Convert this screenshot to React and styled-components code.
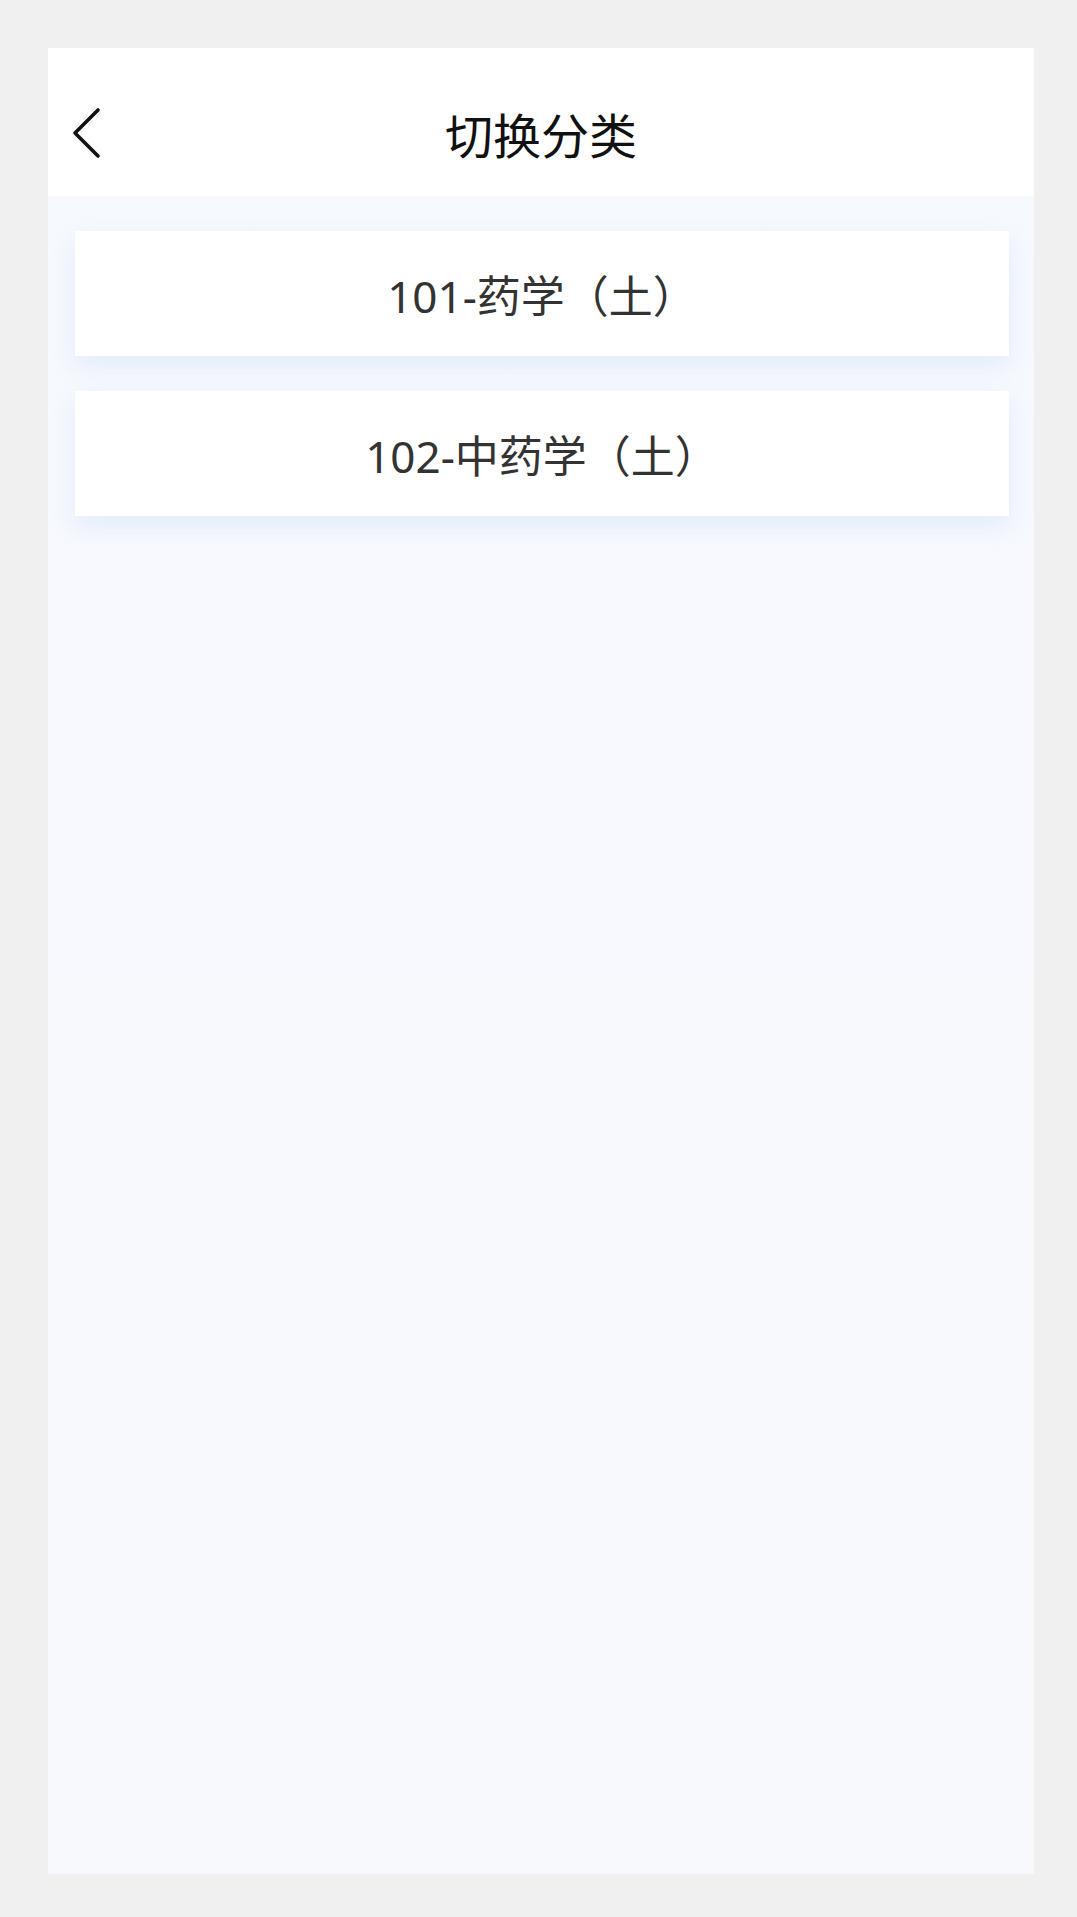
import styled, { createGlobalStyle } from "styled-components";

const GlobalStyle = createGlobalStyle`
  html, body {
    margin: 0;
    padding: 0;
    background: #f0f0f0;
    font-family: "Noto Sans", "Noto Sans CJK SC", sans-serif;
  }
`;

const Page = styled.div`
  padding: 48px 43px 43px 48px;
  box-sizing: border-box;
  min-height: 1917px;
`;

const Phone = styled.div`
  width: 986px;
  height: 1826px;
  display: flex;
  flex-direction: column;
  background: linear-gradient(180deg, #f6f9fe 0%, #f8f9fd 100%);
  overflow: hidden;
`;

const Header = styled.div`
  height: 148px;
  box-sizing: border-box;
  padding-top: 22px;
  background: #ffffff;
  display: grid;
  grid-template-columns: 120px 1fr 120px;
  align-items: center;
  flex-shrink: 0;
`;

const Back = styled.button`
  border: none;
  background: none;
  padding: 0 0 0 22px;
  margin: 0;
  display: flex;
  align-items: center;
  cursor: pointer;
`;

const Title = styled.h1`
  margin: 0;
  text-align: center;
  font-family: "Noto Sans CJK SC", sans-serif;
  font-size: 48px;
  font-weight: 400;
  color: #111;
  line-height: 1;
`;

const List = styled.div`
  display: flex;
  flex-direction: column;
  gap: 35px;
  padding: 35px 25px 0 27px;
`;

const Card = styled.div`
  height: 125px;
  background: #ffffff;
  display: flex;
  align-items: center;
  justify-content: center;
  box-shadow: 0 10px 22px rgba(205, 220, 245, 0.45);
  font-family: "Noto Sans", "Noto Sans CJK SC", sans-serif;
  font-size: 44px;
  color: #333;
  cursor: pointer;
`;

const items = ["101-药学（土）", "102-中药学（土）"];

export default function App() {
  return (
    <>
      <GlobalStyle />
      <Page>
        <Phone>
          <Header>
            <Back aria-label="back">
              <svg width="32" height="52" viewBox="0 0 32 52">
                <path d="M28 3 L5 26 L28 49" fill="none" stroke="#111" strokeWidth="3.6" strokeLinecap="round" strokeLinejoin="round" />
              </svg>
            </Back>
            <Title>切换分类</Title>
            <div />
          </Header>
          <List>
            {items.map((t) => (
              <Card key={t}>{t}</Card>
            ))}
          </List>
        </Phone>
      </Page>
    </>
  );
}
